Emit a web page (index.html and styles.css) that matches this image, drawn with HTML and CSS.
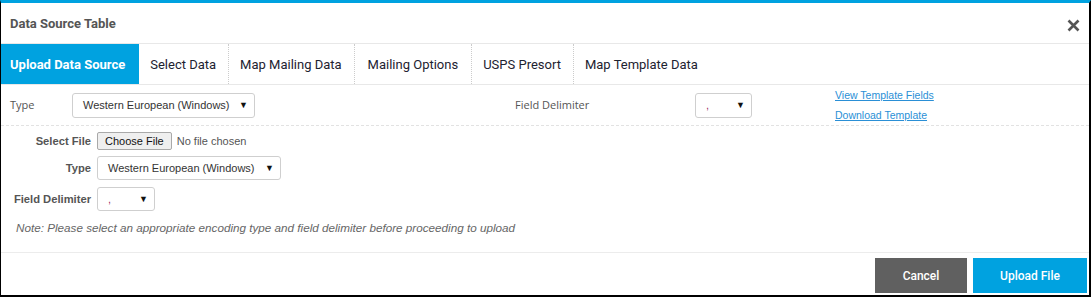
FILE: index.html
```html
<!DOCTYPE html>
<html lang="en">
<head>
  <meta charset="UTF-8" />
  <title>Data Source Table</title>
  <link rel="stylesheet" href="styles.css">
</head>
<body>

<div class="modal">
  <div class="modal-header">
    <span class="modal-title">Data Source Table</span>
    <svg class="close" width="13" height="13" viewBox="0 0 13 13">
      <path d="M1.5 1.5 L11.5 11.5 M11.5 1.5 L1.5 11.5" stroke="#555" stroke-width="2.6" fill="none"/>
    </svg>
  </div>

  <ul class="tabs">
    <li class="tab active">Upload Data Source</li>
    <li class="tab">Select Data</li>
    <li class="tab">Map Mailing Data</li>
    <li class="tab">Mailing Options</li>
    <li class="tab">USPS Presort</li>
    <li class="tab">Map Template Data</li>
  </ul>

  <div class="top-row">
    <span class="row-label">Type</span>
    <div class="select wide">Western European (Windows)</div>
    <span class="row-label delim-label">Field Delimiter</span>
    <div class="select narrow"><span class="comma">,</span></div>
    <div class="links">
      <a href="#">View Template Fields</a>
      <a href="#">Download Template</a>
    </div>
  </div>

  <div class="upload-form">
    <label class="form-label">Select File</label>
    <div class="file-input">
      <span class="file-btn">Choose File</span>
      <span class="file-name">No file chosen</span>
    </div>

    <label class="form-label">Type</label>
    <div><div class="select wide2">Western European (Windows)</div></div>

    <label class="form-label">Field Delimiter</label>
    <div><div class="select narrow2"><span class="comma">,</span></div></div>

    <p class="note">Note: Please select an appropriate encoding type and field delimiter before proceeding to upload</p>
  </div>

  <div class="modal-footer">
    <button class="btn btn-cancel">Cancel</button>
    <button class="btn btn-upload">Upload File</button>
  </div>
</div>

</body>
</html>
```

FILE: styles.css
```css
body {
  margin: 0;
  padding: 0;
  background: #fff;
  font-family: Roboto, 'Liberation Sans', Arial, sans-serif;
}

.modal {
  width: 1088px;
  border-top: 3px solid #00a2e0;
  border-left: 1px solid #000;
  border-right: 2px solid #000;
  border-bottom: 2px solid #000;
  background: #fff;
}

.modal-header {
  height: 40px;
  display: flex;
  align-items: center;
  justify-content: space-between;
  padding: 0 9px;
  border-bottom: 1px solid #e8e8e8;
}

.modal-title {
  font-size: 13px;
  font-weight: bold;
  color: #555;
}

.close {
  margin-right: 0;
  margin-top: 5px;
}

.tabs {
  list-style: none;
  margin: 0;
  padding: 0;
  display: flex;
  height: 40px;
  border-bottom: 1px solid #e8e8e8;
}

.tab {
  display: flex;
  align-items: center;
  padding: 0 12px 0 11px;
  font-size: 13px;
  color: #1d2230;
  border-right: 1px dotted #ccc;
}

.tab:nth-child(4) {
  padding: 0 13px;
}

.tab:last-child {
  border-right: none;
}

.tab.active {
  background: #00a2e0;
  color: #fff;
  font-weight: bold;
  padding: 0 13px 0 9px;
  border-right: 1px solid #00a2e0;
}

.top-row {
  height: 40px;
  display: flex;
  align-items: center;
  padding-left: 9px;
  border-bottom: 1px dashed #e2e2e2;
  font-family: 'Open Sans', 'Liberation Sans', Arial, sans-serif;
}

.row-label {
  font-size: 11px;
  color: #555;
  width: 62px;
  margin-top: -1px;
}

.delim-label {
  width: 180px;
  margin-left: 260px;
}

.select {
  position: relative;
  box-sizing: border-box;
  height: 25px;
  border: 1px solid #cfcfcf;
  border-radius: 3px;
  background: #fff;
  font-family: 'Liberation Sans', Arial, sans-serif;
  font-size: 11px;
  color: #333;
  line-height: 23px;
  padding-left: 10px;
}

.select::after {
  content: "\25BC";
  position: absolute;
  right: 6px;
  top: 0;
  font-size: 9px;
  color: #111;
}

.select.wide {
  width: 183px;
}

.select.narrow {
  width: 57px;
}

.select.wide2 {
  width: 184px;
  height: 24px;
  line-height: 22px;
}

.select.narrow2 {
  width: 58px;
  height: 24px;
  line-height: 22px;
}

.comma {
  color: #a0306a;
}

.links {
  display: flex;
  flex-direction: column;
  gap: 8px;
  margin-left: 83px;
  margin-top: -1px;
}

.links a {
  font-family: 'Liberation Sans', Arial, sans-serif;
  font-size: 10.5px;
  color: #2a8fd6;
  text-decoration: underline;
}

.upload-form {
  height: 127px;
  box-sizing: border-box;
  display: grid;
  grid-template-columns: 81px auto;
  grid-template-rows: 26px 28px 34px auto;
  column-gap: 6px;
  align-items: center;
  align-content: start;
  padding: 2px 0 0 9px;
  border-bottom: 1px solid #ececec;
  font-family: 'Liberation Sans', Arial, sans-serif;
}

.form-label {
  font-size: 11.2px;
  font-weight: bold;
  color: #555;
  text-align: right;
}

.form-label, .upload-form > div {
  height: 100%;
  display: flex;
  align-items: center;
  justify-content: flex-end;
}

.upload-form > div {
  justify-content: flex-start;
}

.file-btn {
  font-size: 11px;
  color: #111;
  background: #efefef;
  border: 1px solid #a9a9a9;
  border-radius: 2px;
  padding: 2px 7px;
}

.file-name {
  font-size: 11px;
  color: #555;
  margin-left: 5px;
}

.note {
  grid-column: 1 / 3;
  margin: 5px 0 0 6px;
  font-size: 11.7px;
  font-style: italic;
  color: #666;
}

.modal-footer {
  height: 42px;
  display: flex;
  justify-content: flex-end;
  align-items: flex-start;
  gap: 6px;
  padding: 5px 2px 0 0;
  box-sizing: border-box;
}

.btn {
  height: 35px;
  border: none;
  color: #fff;
  font-family: Roboto, 'Liberation Sans', Arial, sans-serif;
  font-size: 12px;
  font-weight: 500;
  cursor: pointer;
}

.btn-cancel {
  width: 92px;
  background: #606060;
}

.btn-upload {
  width: 114px;
  background: #00a2e0;
}
```
